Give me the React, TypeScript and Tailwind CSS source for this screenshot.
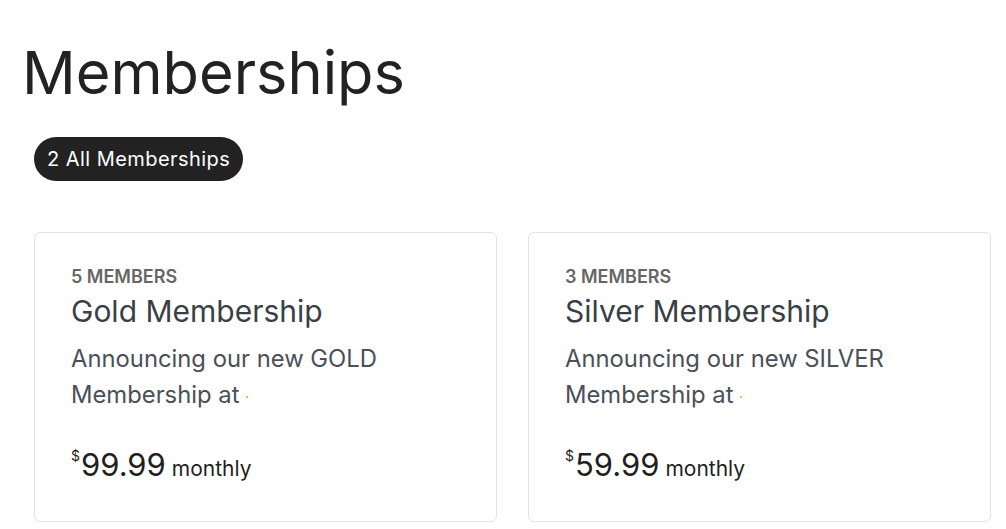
import React from "react";

const plans = [
  { members: 5, name: "Gold Membership", tier: "GOLD", price: "99.99" },
  { members: 3, name: "Silver Membership", tier: "SILVER", price: "59.99" },
];

function PlanCard({ plan }: { plan: (typeof plans)[number] }) {
  return (
    <div className="flex-1 rounded-md border border-[#e3e3e3] bg-white px-[36px] pt-[32px] pb-[36px]">
      <p className="text-[18px] leading-6 font-semibold text-[#666]">{plan.members} MEMBERS</p>
      <h2 className="mt-[2px] text-[30px] leading-[40px] text-[#3a3f47]">{plan.name}</h2>
      <p className="mt-[10px] text-[23.8px] leading-[36px] text-[#4b5058]">
        Announcing our new {plan.tier} Membership at{" "}
        <span className="inline-block h-[2px] w-[2px] rounded-full bg-[#f0a040] align-middle" />
      </p>
      <div className="mt-[34px] flex items-baseline text-[#1f1f1f]">
        <span className="self-start text-[14px] leading-none mt-[2px]">$</span>
        <span className="ml-[1px] text-[31px] leading-[36px]">{plan.price}</span>
        <span className="ml-[6px] text-[21px]">monthly</span>
      </div>
    </div>
  );
}

export default function App() {
  return (
    <main className="min-h-screen bg-white font-['Inter','Liberation_Sans',sans-serif] pl-[22px] pr-[15px] pt-[36px]">
      <h1 className="text-[59.5px] leading-[72px] text-[#222]">Memberships</h1>
      <div className="pl-[12px]">
        <div className="mt-[29px] inline-flex h-[44px] items-center rounded-full bg-[#222] px-[13px] text-[20px] tracking-[0.45px] text-white">
          2 All Memberships
        </div>
        <div className="mt-[51px] flex gap-[31px]">
          {plans.map((p) => (
            <PlanCard key={p.name} plan={p} />
          ))}
        </div>
      </div>
    </main>
  );
}
